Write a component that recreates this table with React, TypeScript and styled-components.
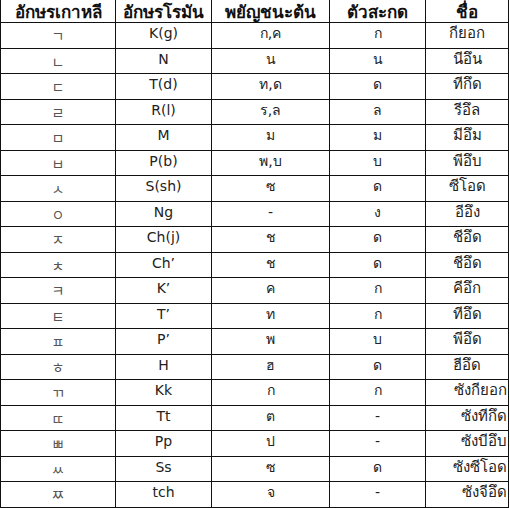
import React from "react";
import styled, { createGlobalStyle } from "styled-components";

const GlobalStyle = createGlobalStyle`
  html, body {
    margin: 0;
    padding: 0;
    background: #ffffff;
  }
  body {
    font-family: "DejaVu Sans", "Noto Sans", sans-serif;
  }
`;

const thaiStack = '"DejaVu Sans", "Noto Sans", sans-serif';

const Grid = styled.div`
  display: grid;
  grid-template-columns: 114px 95px 117px 95px 82px;
  grid-template-rows: 22px repeat(19, 24.5px);
  column-gap: 1px;
  row-gap: 1px;
  width: 509px;
  box-sizing: border-box;
  padding: 0 1px 1px 1px;
  background: #111;
`;

const HeadCell = styled.div`
  background: #fff;
  display: flex;
  align-items: center;
  justify-content: center;
  font-family: ${thaiStack};
  font-weight: bold;
  font-size: 17px;
  color: #111;
  white-space: nowrap;
  overflow: hidden;
`;

const Cell = styled.div<{ $jamo?: boolean; $end?: boolean; $big?: boolean }>`
  background: #fff;
  display: flex;
  align-items: center;
  justify-content: ${(p) => (p.$end ? "flex-end" : "center")};
  padding-bottom: ${(p) => (p.$jamo ? "0" : "4px")};
  padding-right: ${(p) => (p.$end ? "1px" : "0")};
  box-sizing: border-box;
  font-family: ${(p) =>
    p.$jamo ? '"Noto Sans CJK KR", sans-serif' : thaiStack};
  font-size: ${(p) => (p.$jamo ? "14px" : p.$big ? "15px" : "14px")};
  color: ${(p) => (p.$jamo ? "#555" : "#222")};
  white-space: nowrap;
  overflow: hidden;
`;

const headers = ["อักษรเกาหลี", "อักษรโรมัน", "พยัญชนะต้น", "ตัวสะกด", "ชื่อ"];

const rows: [string, string, string, string, string][] = [
  ["ㄱ", "K(g)", "ก,ค", "ก", "กียอก"],
  ["ㄴ", "N", "น", "น", "นีอึน"],
  ["ㄷ", "T(d)", "ท,ด", "ด", "ทีกึด"],
  ["ㄹ", "R(l)", "ร,ล", "ล", "รีอึล"],
  ["ㅁ", "M", "ม", "ม", "มีอึม"],
  ["ㅂ", "P(b)", "พ,บ", "บ", "พีอึบ"],
  ["ㅅ", "S(sh)", "ซ", "ด", "ซีโอด"],
  ["ㅇ", "Ng", "-", "ง", "อีอึง"],
  ["ㅈ", "Ch(j)", "ช", "ด", "ชีอึด"],
  ["ㅊ", "Ch’", "ช", "ด", "ชีอึด"],
  ["ㅋ", "K’", "ค", "ก", "คีอึก"],
  ["ㅌ", "T’", "ท", "ก", "ทีอึด"],
  ["ㅍ", "P’", "พ", "บ", "พีอึด"],
  ["ㅎ", "H", "ฮ", "ด", "ฮีอึด"],
  ["ㄲ", "Kk", "ก", "ก", "ซังกียอก"],
  ["ㄸ", "Tt", "ต", "-", "ซังทีกึด"],
  ["ㅃ", "Pp", "ป", "-", "ซังบีอึบ"],
  ["ㅆ", "Ss", "ซ", "ด", "ซังซีโอด"],
  ["ㅉ", "tch", "จ", "-", "ซังจีอึด"],
];

export default function App() {
  return (
    <>
      <GlobalStyle />
      <Grid>
        {headers.map((h) => (
          <HeadCell key={h}>{h}</HeadCell>
        ))}
        {rows.map((r, i) =>
          r.map((c, j) => (
            <Cell
              key={`${i}-${j}`}
              $jamo={j === 0}
              $big={j === 4}
              $end={j === 4 && c.length > 6}
            >
              {c}
            </Cell>
          ))
        )}
      </Grid>
    </>
  );
}
